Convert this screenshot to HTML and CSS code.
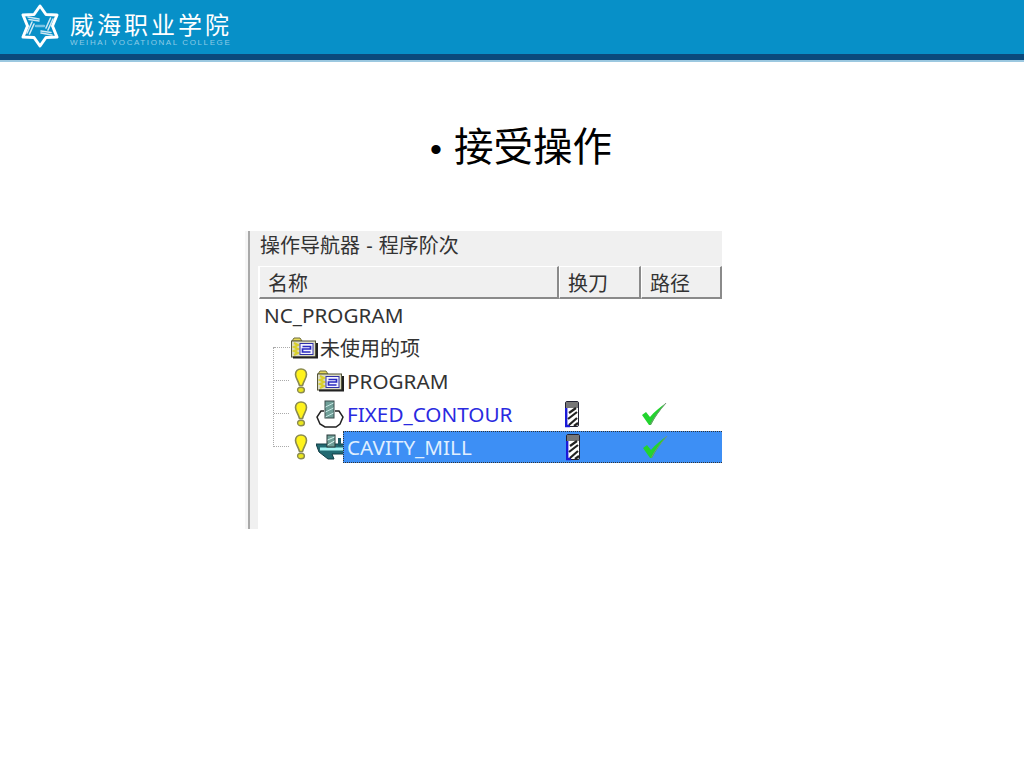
FILE: index.html
```html
<!DOCTYPE html>
<html lang="zh-CN">
<head>
<meta charset="UTF-8">
<meta name="viewport" content="width=device-width, initial-scale=1.0">
<title>接受操作</title>
<link rel="stylesheet" href="styles.css">
</head>
<body>

<svg class="defs" width="0" height="0">
  <symbol id="bulb" viewBox="0 0 14 26">
    <path d="M7 1 C10.5 1 12.5 3.5 12.5 6.5 C12.5 10 9.5 13 8.5 17.5 H5.5 C4.5 13 1.5 10 1.5 6.5 C1.5 3.5 3.5 1 7 1 Z" fill="#fff31c" stroke="#8a8a50" stroke-width="1.6"/>
    <ellipse cx="7" cy="22" rx="3.4" ry="2.8" fill="#eae61e" stroke="#8a8a50" stroke-width="1.4"/>
  </symbol>
  <symbol id="folder" viewBox="0 0 28 24">
    <path d="M2 5 L4 2 H10 L12 5 Z" fill="#e6d95a" stroke="#6c6c40"/>
    <rect x="1.5" y="5" width="24" height="16" fill="#dcdcc4" stroke="#55553a"/>
    <path d="M3 21.5 H27 V7" fill="none" stroke="#222" stroke-width="2"/>
    <path d="M4 7 L8 9 L4 11 L8 13 L4 15 L8 17 L4 19" fill="none" stroke="#d8cf2c" stroke-width="2"/>
    <rect x="10" y="7.5" width="13" height="11" fill="#f4f4ff" stroke="#3030a8"/>
    <path d="M12.5 10.5 H20.5 V13 H12.5 V16 H20.5" fill="none" stroke="#2a2ac0" stroke-width="1.7"/>
  </symbol>
  <symbol id="tool" viewBox="0 0 16 28">
    <rect x="1.5" y="1.5" width="13" height="25" rx="1.5" fill="#fff" stroke="#223"/>
    <rect x="2" y="2" width="12" height="6" fill="#777"/>
    <path d="M2.2 8 V26 H6" stroke="#1a1ad8" stroke-width="2.4" fill="none"/>
    <path d="M5 13 L12 8 M4 19 L13 12 M5 25 L13 18 M10 26 L14 23" stroke="#222" stroke-width="2.2"/>
  </symbol>
  <symbol id="check" viewBox="0 0 26 24">
    <path d="M1 13 L5 10 L9 15 C13 10 19 5 25 1 C19 8 14 15 10 23 H8 Z" fill="#22d42e"/>
    <path d="M9.5 22.5 C13 15 19 8 25 1" stroke="#7d8f7d" fill="none"/>
  </symbol>
</svg>

<header class="banner">
  <svg class="logo" width="42" height="46" viewBox="0 0 42 46" fill="none" stroke-linecap="round">
    <path d="M21 3 L27 11.5 L38 12 L33.5 23 L38 34 L27 34.5 L21 43 L15 34.5 L4 34 L8.5 23 L4 12 L15 11.5 Z" stroke="#fff" stroke-width="3" stroke-linejoin="round"/>
    <path d="M9 14 L20 16 M10 16.5 L20 18 M34 16 L29 27 M31.5 15 L27 25 M33 32 L22 30 M32 29.5 L22 28 M8 30 L13 19 M10.5 31 L15 21" stroke="#cfe9f5" stroke-width="1.6"/>
    <path d="M17 23 H25" stroke="#7cc4e4" stroke-width="2.5"/>
  </svg>
  <div class="brand">
    <div class="brand-name">威海职业学院</div>
    <div class="brand-en">WEIHAI VOCATIONAL COLLEGE</div>
  </div>
</header>
<div class="banner-rule"></div>

<main class="slide">
  <h1 class="heading"><span class="bullet">•</span>接受操作</h1>

  <section class="navigator">
    <div class="nav-title">操作导航器 - 程序阶次</div>
    <div class="columns">
      <div class="col col-name">名称</div>
      <div class="col col-tool">换刀</div>
      <div class="col col-path">路径</div>
    </div>
    <div class="tree">
      <div class="tree-guide"></div>

      <div class="row row-root">NC_PROGRAM</div>

      <div class="row row-group">
        <span class="dots"></span>
        <svg class="icon-folder"><use href="#folder"/></svg>
        <span class="label-cjk">未使用的项</span>
      </div>

      <div class="row row-op">
        <span class="dots dots-short"></span>
        <svg class="bulb"><use href="#bulb"/></svg>
        <svg class="icon-folder"><use href="#folder"/></svg>
        <span class="label">PROGRAM</span>
      </div>

      <div class="row row-op">
        <span class="dots dots-short"></span>
        <svg class="bulb"><use href="#bulb"/></svg>
        <svg class="icon-op" width="28" height="28" viewBox="0 0 28 28">
          <path d="M8 11 L5 11 L1 17 L4 24 L9 27 H20 L24 24 L27 17 L23 11 L19 11" fill="#fff" stroke="#222" stroke-width="1.5"/>
          <rect x="9" y="1" width="9" height="17" fill="#6f9f98" stroke="#3a4a4a"/>
          <path d="M9.5 7 L17.5 3 M9.5 12 L17.5 8 M9.5 17 L17.5 13" stroke="#c4e4e0"/>
        </svg>
        <span class="label label-blue">FIXED_CONTOUR</span>
        <svg class="tool"><use href="#tool"/></svg>
        <svg class="check"><use href="#check"/></svg>
      </div>

      <div class="row row-op">
        <span class="dots dots-short"></span>
        <svg class="bulb"><use href="#bulb"/></svg>
        <svg class="icon-op" width="28" height="26" viewBox="0 0 28 26">
          <path d="M0 10 H28 V20 H16 L18 25 H12 L3 18 Z" fill="#236a72" stroke="#123c44"/>
          <path d="M4 15 H28" stroke="#a5f4f4" stroke-width="3"/>
          <rect x="11" y="1" width="8" height="12" fill="#6f9f98" stroke="#2a3a3a"/>
          <path d="M11.5 6 L18.5 3 M11.5 11 L18.5 7" stroke="#d8f4f0"/>
          <rect x="22" y="4" width="3" height="8" fill="#1e5a62"/>
        </svg>
        <div class="selected">
          <span class="label-sel">CAVITY_MILL</span>
          <svg class="tool"><use href="#tool"/></svg>
          <svg class="check"><use href="#check"/></svg>
        </div>
      </div>
    </div>
  </section>
</main>

</body>
</html>
```

FILE: styles.css
```css
body {
  margin: 0;
  background: #fff;
  font-family: "Noto Sans CJK SC", sans-serif;
  color: #000;
}

.defs {
  position: absolute;
}

.banner {
  height: 54px;
  background: #0790c8;
  display: flex;
  align-items: flex-start;
  padding-left: 19px;
  gap: 9px;
}

.logo {
  margin-top: 3px;
}

.banner-rule {
  height: 6px;
  background: #0b4a7c;
  border-bottom: 2px solid #9cc8e0;
}

.brand {
  color: #fff;
  width: 160px;
  padding-top: 9px;
}

.brand-name {
  font-size: 24px;
  line-height: 29px;
  letter-spacing: 3px;
  white-space: nowrap;
}

.brand-en {
  font-family: "Liberation Sans", sans-serif;
  font-size: 8px;
  line-height: 10px;
  letter-spacing: 1.6px;
  color: #8fcbe6;
  white-space: nowrap;
}

.slide {
  display: flex;
  flex-direction: column;
}

.heading {
  margin: 57px 0 0 430px;
  font-size: 39.5px;
  font-weight: 400;
  line-height: 50px;
  white-space: nowrap;
}

.bullet {
  display: inline-block;
  width: 24px;
  font-family: "Liberation Sans", sans-serif;
  font-size: 34px;
}

.navigator {
  margin: 57px 0 0 245px;
  width: 477px;
  height: 298px;
  background: linear-gradient(to right, #f6f6f6 0 3px, #a9a9a9 3px 5px, #f0f0f0 5px 13px, #fff 13px);
  font-family: "Noto Sans", "Noto Sans CJK SC", sans-serif;
  color: #333;
  display: flex;
  flex-direction: column;
}

.nav-title {
  height: 35px;
  line-height: 29px;
  background: #f0f0f0;
  margin-left: 5px;
  font-size: 20px;
  word-spacing: 1px;
  box-sizing: border-box;
  padding-left: 10px;
  white-space: nowrap;
}

.columns {
  display: flex;
  height: 33px;
  margin-left: 14px;
  font-size: 20px;
}

.col {
  box-sizing: border-box;
  background: #f0f0f0;
  border-top: 1px solid #fff;
  border-left: 1px solid #fff;
  border-right: 2px solid #8a8a8a;
  border-bottom: 2px solid #8a8a8a;
  line-height: 30px;
  padding: 2px 0 0 8px;
}

.col-name { width: 300px; }
.col-tool { width: 82px; }
.col-path { width: 81px; }

.tree {
  position: relative;
  display: flex;
  flex-direction: column;
  margin-top: -1px;
  font-size: 20.7px;
}

.tree-guide {
  position: absolute;
  left: 28px;
  top: 49px;
  height: 100px;
  border-left: 1px dotted #aaa;
}

.row {
  height: 33px;
  display: flex;
  align-items: center;
  white-space: nowrap;
}

.row-root {
  padding-left: 19px;
}

.row-group,
.row-op {
  padding-left: 29px;
}

.dots {
  width: 16px;
  border-top: 1px dotted #aaa;
}

.dots-short {
  width: 15px;
  margin-right: 5px;
}

.icon-folder {
  flex: none;
  width: 28px;
  height: 24px;
}

.icon-op {
  flex: none;
}

.bulb {
  flex: none;
  width: 14px;
  height: 26px;
  margin-right: 8px;
}

.label {
  margin-left: 3px;
}

.label-cjk {
  font-size: 20px;
  margin-left: 2px;
}

.label-blue {
  color: #2a2ae0;
  width: 217px;
}

.tool {
  flex: none;
  width: 16px;
  height: 28px;
  margin-right: 61px;
}

.check {
  flex: none;
  width: 26px;
  height: 24px;
}

.selected {
  flex: 1;
  height: 32px;
  margin-left: -1px;
  box-sizing: border-box;
  display: flex;
  align-items: center;
  background: #3d8ff5;
  border-top: 1px dotted #333;
  border-bottom: 1px dotted #333;
  border-left: 1px dotted #333;
}

.label-sel {
  color: #dfeeff;
  margin-left: 3px;
  width: 218px;
}
```
